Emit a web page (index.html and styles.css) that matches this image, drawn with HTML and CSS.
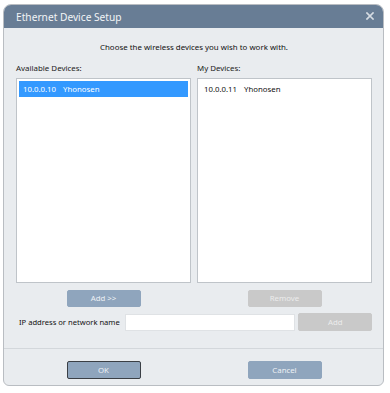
FILE: index.html
```html
<!DOCTYPE html>
<html>
<head>
<meta charset="utf-8">
<link rel="stylesheet" href="styles.css">
</head>
<body>
<div class="dialog">
  <div class="titlebar">
    <span class="title">Ethernet Device Setup</span>
    <svg class="close" width="8" height="8" viewBox="0 0 8 8"><path d="M1 1L7 7M7 1L1 7" stroke="#d6dce3" stroke-width="1.7" stroke-linecap="square"/></svg>
  </div>
  <div class="content">
    <p class="intro">Choose the wireless devices you wish to work with.</p>
    <div class="cols">
      <div class="col">
        <div class="label">Available Devices:</div>
        <div class="listbox">
          <div class="item selected"><span class="ip">10.0.0.10</span>Yhonosen</div>
        </div>
        <div class="btnrow"><button class="btn">Add &gt;&gt;</button></div>
      </div>
      <div class="col">
        <div class="label">My Devices:</div>
        <div class="listbox">
          <div class="item"><span class="ip">10.0.0.11</span>Yhonosen</div>
        </div>
        <div class="btnrow"><button class="btn disabled">Remove</button></div>
      </div>
    </div>
    <div class="iprow">
      <span class="iplabel">IP address or network name</span>
      <input class="ipinput" type="text">
      <button class="btn disabled small">Add</button>
    </div>
  </div>
  <div class="footer">
    <div class="fcol"><button class="btn ok">OK</button></div>
    <div class="fcol"><button class="btn">Cancel</button></div>
  </div>
</div>
</body>
</html>
```
FILE: styles.css
```css
* { box-sizing: border-box; }
html, body { margin: 0; padding: 0; background: #ffffff; }
body {
  font-family: "Noto Sans", "Open Sans", sans-serif;
  width: 390px;
  height: 393px;
  padding: 4px 0 0 3px;
}
.dialog {
  width: 381px;
  height: 382px;
  background: #e9ecef;
  border: 1px solid #b9bdc2;
  border-radius: 8px 8px 6px 6px;
  display: flex;
  flex-direction: column;
  overflow: hidden;
}
.titlebar {
  height: 23px;
  background: #687d95;
  display: flex;
  align-items: center;
  justify-content: space-between;
  padding: 0 9px 0 12px;
  flex: none;
}
.title {
  color: #f2f4f6;
  font-size: 10.2px;
}
.close { margin-top: -1px; }
.content {
  padding: 0 11px 0 12px;
  flex: 1;
  border-bottom: 1px solid #d3d7db;
}
.intro {
  margin: 12px 0 0;
  text-align: center;
  font-size: 7.9px;
  color: #111;
  line-height: 14px;
}
.cols {
  display: flex;
  gap: 6px;
  margin-top: 7px;
}
.col {
  flex: 1;
  display: flex;
  flex-direction: column;
}
.label {
  font-size: 7.9px;
  color: #222;
  line-height: 13px;
  height: 17px;
  padding-top: 1px;
}
.listbox {
  height: 205px;
  background: #ffffff;
  border: 1px solid #bfc4c9;
  padding: 2px;
}
.item {
  height: 16px;
  font-size: 7.8px;
  line-height: 16px;
  color: #111;
  padding-left: 4px;
}
.item.selected {
  background: #3399ff;
  color: #ffffff;
}
.ip { margin-right: 7px; }
.btnrow {
  display: flex;
  justify-content: center;
  margin-top: 7px;
}
.btn {
  width: 74px;
  height: 17px;
  background: #8fa5bd;
  border: 1px solid #8fa5bd;
  border-radius: 2px;
  color: #eef1f5;
  font-family: inherit;
  font-size: 7.8px;
  padding: 0;
  line-height: 15px;
}
.btn.disabled {
  background: #c9c9c9;
  border-color: #c9c9c9;
  color: #ececec;
}
.iprow {
  display: flex;
  align-items: center;
  margin-top: 6px;
  padding-left: 3px;
}
.iplabel {
  font-size: 7.6px;
  color: #111;
  width: 107px;
  white-space: nowrap;
}
.ipinput {
  width: 170px;
  height: 17px;
  border: 1px solid #dfe2e5;
  background: #ffffff;
  margin: 0 3px 0 0;
  padding: 0;
}
.btn.small { height: 18px; }
.footer {
  height: 36px;
  display: flex;
  gap: 6px;
  padding: 12px 11px 0 12px;
  flex: none;
}
.fcol {
  flex: 1;
  display: flex;
  justify-content: center;
  align-items: flex-start;
}
.footer .btn { height: 18px; }
.btn.ok { border-color: #3a3f45; }
```
